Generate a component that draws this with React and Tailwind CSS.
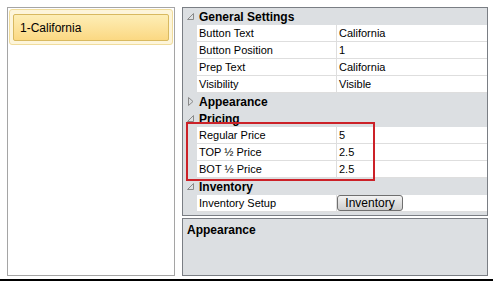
import React from "react";

function ExpandedIcon() {
  return (
    <svg width="9" height="9" viewBox="0 0 9 9" className="block">
      <polygon points="7.5,1.5 7.5,7.5 1.5,7.5" fill="none" stroke="#8a8a8a" strokeWidth="1" />
    </svg>
  );
}

function CollapsedIcon() {
  return (
    <svg width="9" height="11" viewBox="0 0 9 11" className="block">
      <polygon points="2.5,1.5 7,5.5 2.5,9.5" fill="none" stroke="#8a8a8a" strokeWidth="1" />
    </svg>
  );
}

function CategoryRow({ title, open }) {
  return (
    <div className="flex h-[17px] items-center bg-[#dcdfe2]">
      <div className="flex w-[14px] justify-center">{open ? <ExpandedIcon /> : <CollapsedIcon />}</div>
      <span className="pl-[2px] text-[12px] font-bold leading-none text-black">{title}</span>
    </div>
  );
}

function PropRow({ label, children }) {
  return (
    <div className="flex h-[17px]">
      <div className="w-[14px] bg-[#dcdfe2]" />
      <div className="flex w-[140px] items-center border-b border-r border-[#dedede] bg-white pl-[2px] text-[11px]">
        {label}
      </div>
      <div className="flex flex-1 items-center border-b border-[#dedede] bg-white pl-[2px] text-[11px]">
        {children}
      </div>
    </div>
  );
}

export default function App() {
  return (
    <div
      className="flex h-[281px] w-[493px] flex-col bg-white text-black"
      style={{ fontFamily: '"Liberation Sans", Arial, sans-serif' }}
    >
      <div className="flex flex-1 gap-[7px] pl-[7px] pr-[5px] pt-[7px] pb-[3px]">
        {/* item list */}
        <div className="w-[168px] border border-[#a5a5a5] bg-white p-[1px]">
          <div className="rounded-[3px] border border-[#f0dc9c] bg-[#fdf5da] px-[3px] pt-[4px] pb-[3px]">
            <div className="flex h-[27px] items-center rounded-[2px] border border-[#d8b960] bg-gradient-to-b from-[#fdeeb6] to-[#fbd882] pl-[6px] text-[12px]">
              1-California
            </div>
          </div>
        </div>

        {/* property grid */}
        <div className="flex flex-1 flex-col gap-[2px]">
          <div className="relative h-[209px] border border-[#7a7e84] bg-[#dcdfe2]">
            <CategoryRow title="General Settings" open />
            <PropRow label="Button Text">California</PropRow>
            <PropRow label="Button Position">1</PropRow>
            <PropRow label="Prep Text">California</PropRow>
            <PropRow label="Visibility">Visible</PropRow>
            <CategoryRow title="Appearance" />
            <CategoryRow title="Pricing" open />
            <PropRow label="Regular Price">5</PropRow>
            <PropRow label="TOP ½ Price">2.5</PropRow>
            <PropRow label="BOT ½ Price">2.5</PropRow>
            <CategoryRow title="Inventory" open />
            <div className="flex h-[17px]">
              <div className="w-[14px] bg-[#dcdfe2]" />
              <div className="flex w-[140px] items-center border-b border-r border-[#dedede] bg-white pl-[2px] text-[11px]">
                Inventory Setup
              </div>
              <div className="flex flex-1 items-center border-b border-[#dedede] bg-white">
                <button className="h-[16px] w-[66px] rounded-[3px] border border-[#6f6f6f] bg-gradient-to-b from-[#f3f3f3] to-[#cdcdcd] text-[12px] leading-none">
                  Inventory
                </button>
              </div>
            </div>
            <div className="pointer-events-none absolute left-[3px] top-[114px] h-[59px] w-[189px] border-2 border-[#cc2128]" />
          </div>

          <div className="flex-1 border border-[#7a7e84] bg-[#dcdfe2] px-[4px] pt-[5px]">
            <div className="text-[12px] font-bold leading-none">Appearance</div>
          </div>
        </div>
      </div>
      <div className="h-[2px] bg-black" />
    </div>
  );
}
